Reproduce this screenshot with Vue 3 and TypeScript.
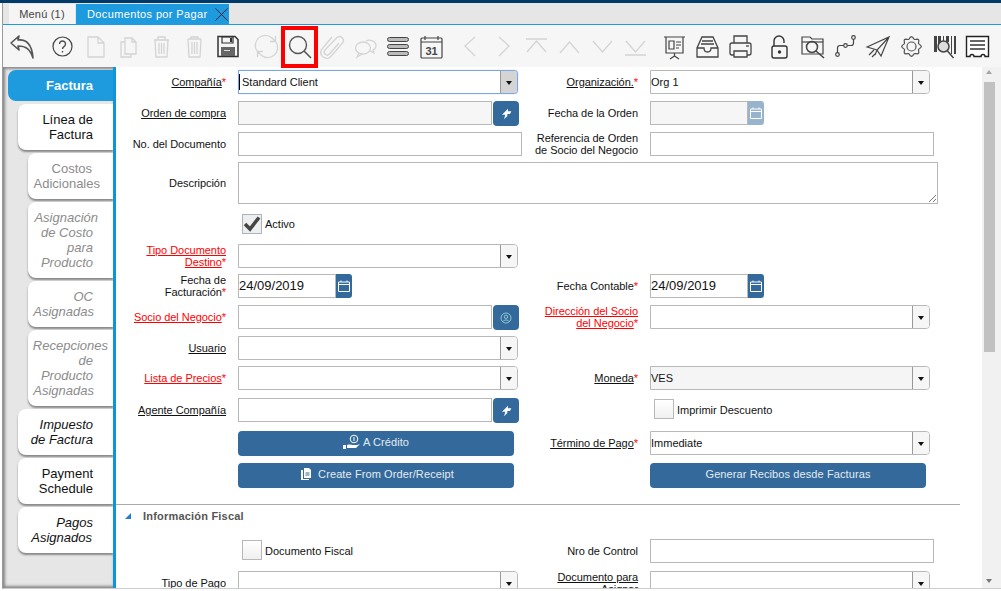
<script setup lang="ts">
interface Line { t: string; r: number }
interface Tab { lines: Line[]; level: number; cls: string }
const tabs: Tab[] = [
  { lines: [{ t: 'Factura', r: 20 }], level: 0, cls: 'active' },
  { lines: [{ t: 'Línea de', r: 20 }, { t: 'Factura', r: 20 }], level: 1, cls: '' },
  { lines: [{ t: 'Costos', r: 21 }, { t: 'Adicionales', r: 13 }], level: 2, cls: 'off' },
  { lines: [{ t: 'Asignación', r: 15 }, { t: 'de Costo', r: 20 }, { t: 'para', r: 20 }, { t: 'Producto', r: 20 }], level: 2, cls: 'off it' },
  { lines: [{ t: 'OC', r: 20 }, { t: 'Asignadas', r: 19 }], level: 2, cls: 'off it' },
  { lines: [{ t: 'Recepciones', r: 5 }, { t: 'de', r: 20 }, { t: 'Producto', r: 20 }, { t: 'Asignadas', r: 19 }], level: 2, cls: 'off it' },
  { lines: [{ t: 'Impuesto', r: 20 }, { t: 'de Factura', r: 20 }], level: 1, cls: 'it' },
  { lines: [{ t: 'Payment', r: 20 }, { t: 'Schedule', r: 20 }], level: 1, cls: '' },
  { lines: [{ t: 'Pagos', r: 20 }, { t: 'Asignados', r: 21 }], level: 1, cls: 'it' }
]
// Outline of an eight-lobed gear, centred in the 33-unit icon box.
const gear: string = (() => {
  const pts: string[] = []
  for (let i = 0; i < 48; i++) {
    const a = (i / 48) * Math.PI * 2
    const r = 8.7 + 1.1 * Math.cos(a * 8)
    pts.push(`${(16.5 + r * Math.sin(a)).toFixed(2)} ${(16.5 - r * Math.cos(a)).toFixed(2)}`)
  }
  return 'M' + pts.join('L') + 'Z'
})()
</script>

<template>
  <div class="app">
    <div class="navy"></div>
    <div class="frame">
      <div class="tabbar">
        <div class="wtab">Menú (1)</div>
        <div class="wtab cur">Documentos por Pagar
          <svg class="close" viewBox="0 0 13 13"><path d="M.5.5l12 12M12.5.5l-12 12" stroke="#123" fill="none"/></svg>
        </div>
      </div>
      <div class="toolbar">
        <div class="grp">
          <svg class="ico" viewBox="0 0 33 33"><path d="M4 13l8-7-1 4c8-1 14 4 15 18-3-9-7-12-15-12l1 4z" fill="none" stroke="#555" stroke-width="1.6" stroke-linejoin="round"/></svg>
        </div>
        <div class="grp">
          <svg class="ico" viewBox="0 0 33 33"><circle cx="16.5" cy="16.5" r="9.5" fill="none" stroke="#444" stroke-width="1.2"/><path d="M13.5 14a3 3 0 1 1 4.5 2.6c-1 .6-1.500 1.200-1.500 2.400M16.500 21v1.500" fill="none" stroke="#444" stroke-width="1.300"/></svg>
          <svg class="ico dim" viewBox="0 0 33 33"><path d="M9 7h10l6 6v14H9zM19 7v6h6"/></svg>
          <svg class="ico dim" viewBox="0 0 33 33"><path d="M13 8h7l4 4v12h-11zM20 8v4h4M13 12H9v15h10v-3"/></svg>
          <svg class="ico dim" viewBox="0 0 33 33"><path d="M9 10h15M13 10V7h7v3M10 10l1 17h11l1-17M14 13v11M16.500 13v11M19 13v11"/></svg>
          <svg class="ico dim" viewBox="0 0 33 33"><path d="M10 9h13M13 9V7h7v2M10 9l1 18h11l1-18M14 12v12M16.500 12v12M19 12v12"/></svg>
          <svg class="ico" viewBox="0 0 33 33"><path d="M7 6.500h17l3 3v17H7z" fill="none" stroke="#333" stroke-width="1.500"/><path d="M11 7h11v6H11z" fill="none" stroke="#333" stroke-width="1.200"/><path d="M19 8h2v4h-2z" fill="#333"/><path d="M10 17h14v9H10z" fill="#666"/><path d="M13 20h6v1h-6z" fill="#ddd"/></svg>
        </div>
        <div class="grp">
          <svg class="ico dim" viewBox="0 0 33 33"><path d="M7 21a10 10 0 0 1 15-13l3 3M25.500 6v5.500H20M26 12a10 10 0 0 1-15 13l-3-3M7.500 27v-5.500H13"/></svg>
          <div class="searchwrap">
            <svg class="ico" viewBox="0 0 33 33"><circle cx="15" cy="15" r="8.500" fill="none" stroke="#555" stroke-width="1.400"/><path d="M21 21l7 7" stroke="#555" stroke-width="1.600"/></svg>
            <div class="redbox"></div>
          </div>
          <svg class="ico dim" viewBox="0 0 33 33"><path d="M23 13L13.500 24a3 3 0 0 1-4.500-4L21 7.500a4 4 0 0 1 6 5L14.500 27a6 6 0 0 1-9-7.500L16 7"/></svg>
          <svg class="ico dim" viewBox="0 0 33 33"><ellipse cx="14" cy="18" rx="7.500" ry="6"/><path d="M10 23l-2 4 5-3M17 11c4-2 10 0 10 5 0 2-1 3-3 4l1 3-4-2"/></svg>
          <svg class="ico" viewBox="0 0 33 33"><rect x="5.500" y="7.500" width="21" height="4" rx="2" fill="#bbb" stroke="#444"/><rect x="5.500" y="14.500" width="21" height="4" rx="2" fill="#bbb" stroke="#444"/><rect x="5.500" y="21.500" width="21" height="4" rx="2" fill="#bbb" stroke="#444"/></svg>
          <svg class="ico" viewBox="0 0 33 33"><rect x="6" y="8" width="21" height="20" rx="1" fill="none" stroke="#444" stroke-width="1.200"/><path d="M6 12h21M10 6v4M23 6v4" stroke="#444" stroke-width="1.200"/><text x="16.500" y="25" text-anchor="middle" class="cal">31</text></svg>
        </div>
        <div class="grp">
          <svg class="ico dim" viewBox="0 0 33 33"><path d="M21 7l-10 9 10 10"/></svg>
          <svg class="ico dim" viewBox="0 0 33 33"><path d="M12 7l10 9-10 10"/></svg>
          <svg class="ico dim" viewBox="0 0 33 33"><path d="M6 9h21M7 22l9.500-11L26 22"/></svg>
          <svg class="ico dim" viewBox="0 0 33 33"><path d="M7 23l9.500-11L26 23"/></svg>
          <svg class="ico dim" viewBox="0 0 33 33"><path d="M7 11l9.500 11L26 11"/></svg>
          <svg class="ico dim" viewBox="0 0 33 33"><path d="M6 25h21M7 11l9.500 11L26 11"/></svg>
        </div>
        <div class="grp">
          <svg class="ico" viewBox="0 0 33 33"><g fill="none" stroke="#444" stroke-width="1.200"><path d="M6 7h21M8 7v16h17V7M16.500 23v3M12 29l4.500-3 4.500 3"/><path d="M11 11h5v8h-5zM18 12h5M18 15h5M18 18h3"/></g></svg>
          <svg class="ico" viewBox="0 0 33 33"><g fill="none" stroke="#444" stroke-width="1.300"><path d="M11 7h11l5 11v9H6v-9zM6 18h7c0 3 2 4 3.500 4s3.500-1 3.500-4h7M11 11h11M10 14h13"/></g></svg>
          <svg class="ico" viewBox="0 0 33 33"><g fill="none" stroke="#444" stroke-width="1.300"><path d="M10 13V6h13v7M10 25H8a2 2 0 0 1-2-2V15a2 2 0 0 1 2-2h17a2 2 0 0 1 2 2v8a2 2 0 0 1-2 2h-2M10 21h13v6H10z"/><path d="M22 16h3"/></g></svg>
        </div>
        <div class="grp">
          <svg class="ico" viewBox="0 0 33 33"><g fill="none" stroke="#333" stroke-width="1.400"><path d="M11 16v-5a5 5 0 0 1 10 0v2"/><rect x="9" y="16" width="15" height="12" rx="2"/></g><circle cx="16.500" cy="22" r="1.700" fill="#333"/></svg>
          <svg class="ico" viewBox="0 0 33 33"><g fill="none" stroke="#444" stroke-width="1.200"><path d="M6 7h8l2 2h11v15H6z"/><path d="M6 12h21"/><circle cx="16" cy="17" r="5.500" stroke-width="1.500"/><path d="M20 21l8 7" stroke-width="1.500"/></g></svg>
          <svg class="ico" viewBox="0 0 33 33"><g fill="none" stroke="#444" stroke-width="1.200"><circle cx="8.500" cy="24.500" r="1.800"/><circle cx="16.500" cy="15.500" r="1.800"/><circle cx="24.500" cy="7.500" r="1.800"/><path d="M8.500 22.700V18q0-2.500 2.500-2.500h3.700M18.300 15.500H22q2.500 0 2.500-2.500V9.300"/></g></svg>
          <svg class="ico" viewBox="0 0 33 33"><g fill="none" stroke="#444" stroke-width="1.200"><path d="M5 17L27 7 19 26l-4-6zM27 7L15 20l-2 5M7 25l5-5M10 27l3-3"/></g></svg>
          <svg class="ico" viewBox="0 0 33 33"><g fill="none" stroke="#555" stroke-width="1.200"><circle cx="16.500" cy="16.500" r="4.500"/><path :d="gear"/></g></svg>
          <svg class="ico" viewBox="0 0 33 33"><path d="M6 6h3v16H6zM10 6h3v14h-3zM15 6h1v6h-1zM18 6h3v6h-3zM23 6h1v18h-1zM26 6h2v18h-2z" fill="#444"/><circle cx="15.500" cy="16.500" r="5.500" fill="#ddd" stroke="#444" stroke-width="1.500"/><path d="M19.500 21l6 7" stroke="#444" stroke-width="1.500"/></svg>
          <svg class="ico" viewBox="0 0 33 33"><path d="M5.500 6.500h22v20h-3.500a2 2 0 0 0-4 0h-7a2 2 0 0 0-4 0H5.500z" fill="#fff" stroke="#222" stroke-width="1.400"/><path d="M9 10h15v2H9zM9 14h15v2H9zM9 18h15v2H9z" fill="#666"/></svg>
        </div>
      </div>
      <div class="body">
        <nav class="side">
          <div v-for="tab in tabs" :key="tab.lines[0].t" class="stab" :class="[tab.cls, 'lv' + tab.level]">
            <span v-for="l in tab.lines" :key="l.t" class="sl" :style="{ marginRight: l.r + 'px' }">{{ l.t }}</span>
          </div>
        </nav>
        <main class="content">
          <div class="form main">
            <label class="lab"><span><u>Compañía</u><i>*</i></span></label>
            <div class="sel focus w280"><span class="v caret">Standard Client</span><b class="arr gray"></b></div>
            <label class="lab"><span><u>Organización.</u><i>*</i></span></label>
            <div class="sel w280"><span class="v">Org 1</span><b class="arr"></b></div>

            <label class="lab"><span><u>Orden de compra</u></span></label>
            <div class="with"><div class="inp ro w254"></div><button class="blu">
              <svg viewBox="0 0 12 12" width="16" height="16"><path d="M7.500 2L3 6.500h2.500L4.500 10 7 7.500V6h2L10 4H7.500z" fill="#fff"/></svg></button></div>
            <label class="lab"><span>Fecha de la Orden</span></label>
            <div class="with"><div class="inp ro w98"></div><button class="date faded"><svg viewBox="0 0 14 14" width="14" height="14"><path d="M1.500 3h11v9.500h-11zM1.500 5.500h11M4 1.500V3M10 1.500V3" fill="none" stroke="#fff"/></svg></button></div>

            <label class="lab"><span>No. del Documento</span></label>
            <div class="inp w284"></div>
            <label class="lab"><span>Referencia de Orden<br>de Socio del Negocio</span></label>
            <div class="inp w284"></div>

            <label class="lab tall"><span>Descripción</span></label>
            <div class="inp area"><svg class="grip" viewBox="0 0 8 8" width="8" height="8"><path d="M1 8l7-7M5 8l3-3" stroke="#555" stroke-width=".8"/></svg></div>

            <span></span>
            <div class="chk on"><span class="box"><svg viewBox="0 0 20 20" width="20" height="20"><path d="M3 10l5 5L17 3.500" fill="none" stroke="#444" stroke-width="3.500"/></svg></span>Activo</div>
            <span></span><span></span>

            <label class="lab red"><span><u>Tipo Documento<br>Destino</u><i>*</i></span></label>
            <div class="sel w280"><span class="v"></span><b class="arr"></b></div>
            <span></span><span></span>

            <label class="lab"><span>Fecha de<br>Facturación<i>*</i></span></label>
            <div class="with"><div class="inp w98 val">24/09/2019</div><button class="date"><svg viewBox="0 0 14 14" width="14" height="14"><path d="M1.500 3h11v9.500h-11zM1.500 5.500h11M4 1.500V3M10 1.500V3" fill="none" stroke="#fff"/></svg></button></div>
            <label class="lab"><span>Fecha Contable<i>*</i></span></label>
            <div class="with"><div class="inp w98 val">24/09/2019</div><button class="date"><svg viewBox="0 0 14 14" width="14" height="14"><path d="M1.500 3h11v9.500h-11zM1.500 5.500h11M4 1.500V3M10 1.500V3" fill="none" stroke="#fff"/></svg></button></div>

            <label class="lab red"><span><u>Socio del Negocio</u><i>*</i></span></label>
            <div class="with"><div class="inp w254"></div><button class="blu"><svg viewBox="0 0 14 14" width="14" height="14"><circle cx="7" cy="7" r="5" fill="none" stroke="#cfe" stroke-opacity=".6"/><circle cx="7" cy="5.800" r="1.700" fill="none" stroke="#cfe" stroke-opacity=".6"/><path d="M4 10.500c1-2 5-2 6 0" fill="none" stroke="#cfe" stroke-opacity=".6"/></svg></button></div>
            <label class="lab red"><span><u>Dirección del Socio<br>del Negocio</u><i>*</i></span></label>
            <div class="sel w280"><span class="v"></span><b class="arr"></b></div>

            <label class="lab"><span><u>Usuario</u></span></label>
            <div class="sel w280"><span class="v"></span><b class="arr"></b></div>
            <span></span><span></span>

            <label class="lab red"><span><u>Lista de Precios</u><i>*</i></span></label>
            <div class="sel w280"><span class="v"></span><b class="arr"></b></div>
            <label class="lab"><span><u>Moneda</u><i>*</i></span></label>
            <div class="sel w280 ro"><span class="v">VES</span><b class="arr"></b></div>

            <label class="lab"><span><u>Agente Compañía</u></span></label>
            <div class="with"><div class="inp w254"></div><button class="blu">
              <svg viewBox="0 0 12 12" width="16" height="16"><path d="M7.500 2L3 6.500h2.500L4.500 10 7 7.500V6h2L10 4H7.500z" fill="#fff"/></svg></button></div>
            <span></span>
            <div class="chk off"><span class="box"></span><span class="txt">Imprimir Descuento</span></div>

            <span></span>
            <button class="act">
              <svg viewBox="0 0 18 16" width="18" height="16"><circle cx="11" cy="5" r="3.800" fill="none" stroke="#fff"/><path d="M11 3v4" stroke="#fff"/><path d="M0 11h3v4H0zM4 11c3-1 4 0 6 0h4l3-1-4 4H4z" fill="#fff"/></svg>
              A Crédito</button>
            <label class="lab"><span><u>Término de Pago</u><i>*</i></span></label>
            <div class="sel w280"><span class="v">Immediate</span><b class="arr"></b></div>

            <span></span>
            <button class="act nudge"><svg class="doc" viewBox="0 0 10 12" width="10" height="12"><path d="M3 0h5l2 2v8H3z" fill="#fff"/><path d="M0 2h2v9h6v1H0z" fill="#fff"/><path d="M4.500 5h4M4.500 7h4" stroke="#336a9b"/></svg>
              Create From Order/Receipt</button>
            <span></span>
            <button class="act">Generar Recibos desde Facturas</button>
          </div>

          <hr class="rule">
          <div class="sect"><svg viewBox="0 0 6 6" width="6" height="6"><path d="M0 6L6 0v6z" fill="#1f7fd0"/></svg><b>Información Fiscal</b></div>

          <div class="form second">
            <span></span>
            <div class="chk off"><span class="box"></span><span class="txt">Documento Fiscal</span></div>
            <label class="lab"><span>Nro de Control</span></label>
            <div class="inp w284"></div>

            <label class="lab"><span><u>Tipo de Pago</u></span></label>
            <div class="sel w280"><span class="v"></span><b class="arr"></b></div>
            <label class="lab"><span><u>Documento para<br>Asignar</u></span></label>
            <div class="sel w280"><span class="v"></span><b class="arr"></b></div>
          </div>
        </main>
        <div class="scroll">
          <span class="up"></span>
          <span class="thumb"></span>
          <span class="down"></span>
        </div>
      </div>
    </div>
  </div>
</template>

<style>
html, body { margin: 0; background: #fff; }
</style>

<style scoped>
.app { width: 1001px; height: 591px; overflow: hidden; font-family: "Liberation Sans", Arial, sans-serif; font-size: 11px; color: #111; display: flex; flex-direction: column; background: #fff; }
.navy { height: 3px; background: #003a6b; flex: none; }
.frame { margin-left: 2px; border-left: 1px solid #9a9a9a; flex: 1; display: flex; flex-direction: column; min-height: 0; margin-bottom: 2px; border-bottom: 1px solid #ccc; overflow: hidden; }
.tabbar { height: 21px; flex: none; background: #e6e6e6; display: flex; align-items: flex-end; padding: 0 0 0 6px; border-bottom: 1px solid #1e9ade; }
.wtab { height: 20px; line-height: 20px; width: 66px; box-sizing: border-box; background: #f5f5f5; text-align: center; font-size: 11px; color: #444; letter-spacing: .2px; }
.wtab.cur { position: relative; width: 153px; margin-left: 1px; background: #1e9ade; color: #fff; text-align: left; padding-left: 11px; font-size: 11px; letter-spacing: .37px; }
.close { position: absolute; right: 1px; top: 4px; width: 13px; height: 13px; }
.toolbar { height: 42px; flex: none; background: #f6f6f6; display: flex; align-items: center; padding-left: 4px; }
.grp { display: flex; margin-right: 6px; }
.ico { width: 33px; height: 33px; display: block; flex: none; }
.dim { fill: none; stroke: #d4d4d4; stroke-width: 1.300; }
.cal { font: bold 11px "Liberation Sans", Arial, sans-serif; fill: #444; }
.searchwrap { position: relative; width: 33px; height: 33px; }
.redbox { position: absolute; left: -2px; top: -4px; width: 37px; height: 42px; box-sizing: border-box; border: 4px solid #f00; }
.body { flex: 1; min-height: 0; display: flex; }
.side { width: 110px; flex: none; box-sizing: border-box; background: #e6e6e6; padding-top: 3px; display: flex; flex-direction: column; align-items: flex-end; gap: 3px; box-shadow: inset 3px 3px 3px -1px #888, inset 0 -3px 3px -1px #888; }
.stab { box-sizing: border-box; background: #fff; border-radius: 8px 0 0 8px; box-shadow: 0 2px 2px #888; display: flex; flex-direction: column; align-items: flex-end; padding: 8px 0; font-size: 13px; line-height: 15px; color: #111; }
.sl { white-space: nowrap; }
.lv0 { width: 105px; height: 31px; }
.lv1 { width: 95px; }
.lv2 { width: 85px; }
.active { background: #1e9ade; color: #fff; font-weight: 700; box-shadow: none; justify-content: center; padding: 0; }
.off { color: #8c8c8c; }
.it { font-style: italic; }
.content { flex: 1; min-width: 0; border-left: 3px solid #0e95d8; background: #fff; padding-top: 3px; overflow: hidden; }
.form { display: grid; grid-template-columns: 110px 286px 102px 288px; column-gap: 12px; }
.main { grid-template-rows: 31px 31px 30px 51px 31px 30px 31px 31px 30px 32px 33px 32px 25px; }
.second { grid-auto-rows: 32px; margin-top: 12px; }
.lab { height: 24px; display: flex; align-items: center; justify-content: flex-end; text-align: right; line-height: 12px; color: #111; white-space: nowrap; letter-spacing: -.05px; }
.lab.tall { height: 42px; }
.lab i { color: #f00; font-style: normal; }
.lab.red { color: #f00; }
.inp { height: 24px; box-sizing: border-box; border: 1px solid #b8b8b8; background: #fff; }
.inp.ro { background: #f6f6f6; }
.val { font-size: 13px; line-height: 22px; color: #111; }
.w284 { width: 284px; }
.w254 { width: 254px; }
.w98 { width: 98px; }
.area { grid-column: 2 / 5; width: 700px; height: 42px; position: relative; }
.grip { position: absolute; right: 1px; bottom: 1px; }
.sel { display: flex; height: 24px; box-sizing: border-box; border: 1px solid #b8b8b8; border-radius: 0 4px 4px 0; background: #fff; }
.sel.w280 { width: 280px; }
.sel.focus { border-color: #7ea6e6; box-shadow: 0 0 1px #7ea6e6; }
.sel.ro { background: #f5f5f5; }
.v { flex: 1; line-height: 22px; font-size: 11px; }
.caret { border-left: 1px solid #000; margin: 3px 0; line-height: 16px; padding-left: 2px; }
.arr { width: 16px; flex: none; border-left: 1px solid #999; position: relative; background: #f6f6f6; border-radius: 0 3px 3px 0; }
.arr.gray { background: #d4d4d4; }
.arr::after { content: ""; position: absolute; left: 5px; top: 10px; border: 3.500px solid transparent; border-top: 4px solid #111; border-bottom: 0; }
.with { display: flex; gap: 1px; align-items: flex-start; }
.blu { width: 26px; height: 25px; padding: 0; border: 0; border-radius: 4px; background: #336a9b; display: flex; align-items: center; justify-content: center; }
.date { width: 16px; height: 24px; padding: 0; border: 0; border-radius: 0 3px 3px 0; margin-left: -1px; background: #336a9b; display: flex; align-items: center; justify-content: center; }
.faded { background: #98b4cd; }
.chk { display: flex; align-items: center; gap: 3px; padding-left: 4px; height: 20px; margin-top: 1px; color: #111; }
.txt { margin-top: 2px; }
.box { width: 20px; height: 20px; box-sizing: border-box; border: 1px solid #b8b8b8; background: linear-gradient(#fff, #f0f0f0); display: block; overflow: visible; }
.on .box { background: #eee; border-color: #aab4bc; }
.box svg { display: block; margin: -1px; }
.act { width: 276px; height: 25px; box-sizing: border-box; padding: 0 0 3px; border: 0; border-radius: 4px; background: #336a9b; color: #e4ebf2; font: 11px "Liberation Sans", Arial, sans-serif; letter-spacing: .1px; display: flex; align-items: center; justify-content: center; gap: 2px; }
.nudge { padding-left: 3px; }
.doc { margin-right: 5px; }
.rule { margin: 16px 22px 0 0; height: 1px; border: 0; background: #aaa; }
.sect { height: 22px; display: flex; align-items: center; gap: 12px; padding-left: 9px; font-size: 11px; color: #555; letter-spacing: .2px; }
.scroll { width: 19px; flex: none; background: #f1f1f1; position: relative; }
.thumb { position: absolute; left: 2px; top: 15px; width: 11px; height: 270px; background: #c1c1c1; }
.up, .down { position: absolute; left: 4px; border: 3.500px solid transparent; }
.up { top: 3px; border-bottom: 4px solid #a6a6a6; border-top: 0; }
.down { bottom: 5px; border-top: 4px solid #777; border-bottom: 0; }
</style>
